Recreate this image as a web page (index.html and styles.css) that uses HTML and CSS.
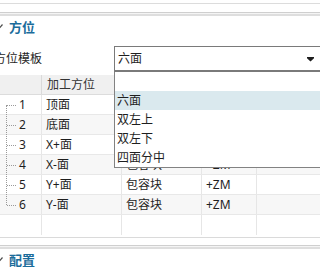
FILE: index.html
```html
<!DOCTYPE html>
<html>
<head>
  <meta charset="UTF-8">
  <title>方位设置</title>
  <link rel="stylesheet" href="styles.css">
</head>
<body>
  <div class="panel">
    <div class="edge"></div>
    <div class="sep"></div>
    <div class="sec-head">
      <svg class="chev" width="8" height="6" viewBox="0 0 8 6"><polyline points="0.5,0.5 4,4.5 7.5,0.5" fill="none" stroke="#4a4a4a" stroke-width="1.2"/></svg>
      <span>方位</span>
    </div>

    <div class="field">
      <label class="field-label">方位模板</label>
      <div class="combo">
        <span class="combo-value">六面</span>
        <svg class="combo-arrow" width="7" height="5" viewBox="0 0 7 5"><path d="M0 0H7V1.2L3.5 4.6L0 1.2Z" fill="#1e1e1e"/></svg>
        <ul class="combo-list">
          <li class="empty"></li>
          <li class="selected">六面</li>
          <li>双左上</li>
          <li>双左下</li>
          <li>四面分中</li>
        </ul>
      </div>
    </div>

    <div class="grid">
      <div class="grid-row head">
        <div class="cell c-tree"></div>
        <div class="cell c-face">加工方位</div>
        <div class="cell c-type">类型</div>
        <div class="cell c-dir">方向</div>
        <div class="cell c-rest"></div>
      </div>
      <div class="grid-row">
        <div class="cell c-tree first"><span class="num">1</span></div>
        <div class="cell c-face">顶面</div>
        <div class="cell c-type">包容块</div>
        <div class="cell c-dir">+ZM</div>
        <div class="cell c-rest"></div>
      </div>
      <div class="grid-row alt">
        <div class="cell c-tree"><span class="num">2</span></div>
        <div class="cell c-face">底面</div>
        <div class="cell c-type">包容块</div>
        <div class="cell c-dir">+ZM</div>
        <div class="cell c-rest"></div>
      </div>
      <div class="grid-row">
        <div class="cell c-tree"><span class="num">3</span></div>
        <div class="cell c-face">X+面</div>
        <div class="cell c-type">包容块</div>
        <div class="cell c-dir">+ZM</div>
        <div class="cell c-rest"></div>
      </div>
      <div class="grid-row alt">
        <div class="cell c-tree"><span class="num">4</span></div>
        <div class="cell c-face">X-面</div>
        <div class="cell c-type">包容块</div>
        <div class="cell c-dir">+ZM</div>
        <div class="cell c-rest"></div>
      </div>
      <div class="grid-row">
        <div class="cell c-tree"><span class="num">5</span></div>
        <div class="cell c-face">Y+面</div>
        <div class="cell c-type">包容块</div>
        <div class="cell c-dir">+ZM</div>
        <div class="cell c-rest"></div>
      </div>
      <div class="grid-row alt">
        <div class="cell c-tree last"><span class="num">6</span></div>
        <div class="cell c-face">Y-面</div>
        <div class="cell c-type">包容块</div>
        <div class="cell c-dir">+ZM</div>
        <div class="cell c-rest"></div>
      </div>
      <div class="grid-row filler">
        <div class="cell c-tree"></div>
        <div class="cell c-face"></div>
        <div class="cell c-type"></div>
        <div class="cell c-dir"></div>
        <div class="cell c-rest"></div>
      </div>
    </div>
    <div class="grid-end"></div>

    <div class="sep bottom"></div>
    <div class="sec-head">
      <svg class="chev" width="8" height="6" viewBox="0 0 8 6"><polyline points="0.5,0.5 4,4.5 7.5,0.5" fill="none" stroke="#4a4a4a" stroke-width="1.2"/></svg>
      <span>配置</span>
    </div>
  </div>
</body>
</html>
```

FILE: styles.css
```css
* { box-sizing: border-box; }
html, body {
  margin: 0; padding: 0;
  background: #fff;
  overflow: hidden;
  font-family: "Noto Sans", "Noto Sans CJK SC", sans-serif;
  font-size: 12px;
  color: #1e1e1e;
}
.panel { width: 320px; height: 270px; overflow: hidden; }

.edge { height: 4px; border-bottom: 1px solid #dcdcdc; }
.sep {
  margin-top: 8px;
  height: 4px;
  border-top: 1px solid #cfcfcf;
  border-bottom: 2px solid #dedede;
  background: #f4f4f4;
}
.sep.bottom { margin-top: 7px; }

.sec-head {
  height: 22px;
  display: flex; align-items: center;
  gap: 6px;
  margin-left: -5px;
  color: #1b6c9b;
  font-weight: bold;
  font-size: 13px;
  line-height: 22px;
}
.chev { flex: none; }

.field {
  display: flex;
  margin-top: 8px;
  height: 26px;
}
.field-label {
  flex: none;
  width: 120px;
  margin-left: -6px;
  line-height: 25px;
}
.combo {
  position: relative;
  flex: none;
  width: 210px;
  height: 26px;
  border: 1px solid #7a7a7a;
  border-bottom-width: 2px;
  display: flex; align-items: center;
  padding-left: 3px;
  z-index: 2;
}
.combo-value { flex: 1; line-height: 22px; }
.combo-arrow { margin-right: 9px; margin-top: 1px; }
.combo-list {
  position: absolute;
  left: -1px; top: calc(100% + 2px);
  width: 220px;
  margin: 0; padding: 0;
  list-style: none;
  background: #fff;
  border: 1px solid #828282;
  border-top: none;
}
.combo-list li {
  height: 19px;
  line-height: 19px;
  padding-left: 2px;
}
.combo-list li.selected { background: #dae9ee; }

.grid { margin-top: 3px; }
.grid-row {
  display: flex;
  height: 20px;
  border-bottom: 1px solid #e8e8e8;
}
.grid-row.head { background: #f0f0f0; border-bottom-color: #dcdcdc; }
.grid-row.alt { background: #f7f7f7; }
.grid-row.filler { border-bottom: none; }
.cell {
  flex: none;
  height: 100%;
  line-height: 19px;
  padding-left: 4px;
  border-right: 1px solid #e6e6e6;
  white-space: nowrap;
}
.head .cell { border-right-color: #dadada; padding-left: 5px; color: #333; }
.c-tree { width: 42px; position: relative; padding-left: 19px; }
.c-face { width: 80px; }
.c-type { width: 80px; }
.c-dir { width: 55px; }
.c-rest { flex: 1; border-right: none; }

.grid-row:not(.head):not(.filler) .c-tree::before {
  content: "";
  position: absolute;
  left: 6px; top: -1px; bottom: -1px;
  border-left: 1px dotted #9a9a9a;
}
.c-tree.first::before { top: 10px !important; }
.c-tree.last::before { bottom: 9px !important; }
.grid-row:not(.head):not(.filler) .c-tree::after {
  content: "";
  position: absolute;
  left: 7px; top: 10px; width: 9px;
  border-top: 1px dotted #9a9a9a;
}
.num { color: #1e1e1e; }

.grid-end { margin-top: 2px; border-bottom: 1px solid #dadada; }
```
